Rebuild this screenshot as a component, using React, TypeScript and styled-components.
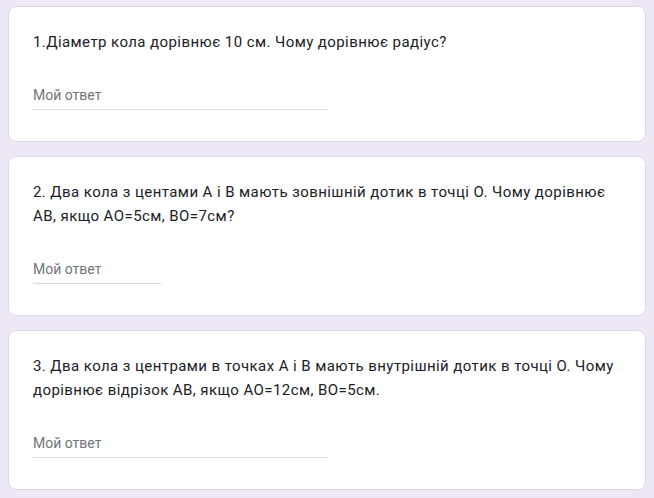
import React from 'react'
import styled, { createGlobalStyle } from 'styled-components'

const GlobalStyle = createGlobalStyle`
    html, body {
        margin: 0;
        padding: 0;
        background: #ede7f6;
    }
`

const Page = styled.div`
    display: flex;
    flex-direction: column;
    gap: 14px;
    padding: 6px 8px 8px;
    font-family: Roboto, "Noto Sans", sans-serif;
`

const Card = styled.div`
    background: #fff;
    border: 1px solid #dadce0;
    border-radius: 8px;
    padding: 23px 24px 31px;
`

const Question = styled.div`
    font-size: 15px;
    line-height: 24px;
    color: #202124;
    letter-spacing: 0.42px;
`

const Answer = styled.div<{ $width: number }>`
    margin-top: 32px;
    width: ${p => p.$width}px;
    font-size: 14px;
    line-height: 18px;
    color: #70757a;
    padding-bottom: 5px;
    border-bottom: 1px solid #dadce0;
`

const questions = [
    { text: '1.Діаметр кола дорівнює 10 см. Чому дорівнює радіус?', width: 295 },
    { text: '2. Два кола з центами А і В мають зовнішній дотик в точці О. Чому дорівнює АВ, якщо АО=5см, ВО=7см?', width: 128 },
    { text: '3. Два кола з центрами в точках А і В мають внутрішній дотик в точці О. Чому дорівнює відрізок АВ, якщо АО=12см, ВО=5см.', width: 295 },
]

export default function App() {
  return (
      <>
          <GlobalStyle />
          <Page>
              {questions.map((q, i) => (
                  <Card key={i}>
                      <Question>{q.text}</Question>
                      <Answer $width={q.width}>Мой ответ</Answer>
                  </Card>
              ))}
          </Page>
      </>
  )
}
